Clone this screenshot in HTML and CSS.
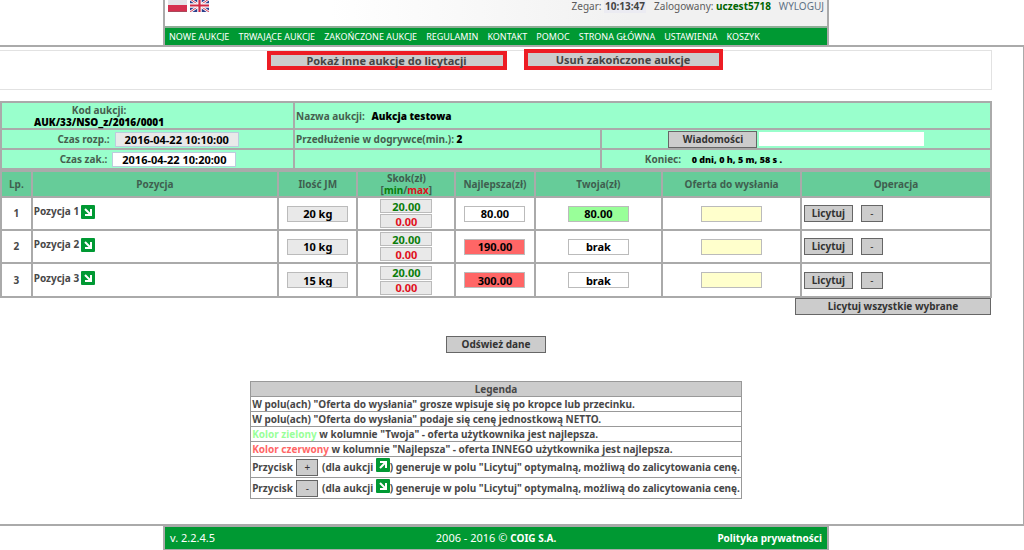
FILE: index.html
```html
<!DOCTYPE html>
<html lang="pl">
<head>
<meta charset="utf-8">
<title>Aukcja testowa</title>
<link rel="stylesheet" href="styles.css">
</head>
<body>
<svg class="defs" aria-hidden="true">
  <symbol id="arrow-down" viewBox="0 0 14 14">
    <rect width="14" height="14" rx="1" fill="#093"/>
    <path d="M4 4l5 5M10 4v6H4" fill="none" stroke="#fff" stroke-width="2"/>
  </symbol>
  <symbol id="arrow-up" viewBox="0 0 14 14">
    <rect width="14" height="14" rx="1" fill="#093"/>
    <path d="M4 10l5-5M4 4h6v6" fill="none" stroke="#fff" stroke-width="2"/>
  </symbol>
</svg>
<div class="frame">
  <header class="header">
    <div class="topbar">
      <div class="flags">
        <svg width="19" height="12" viewBox="0 0 19 12" role="img" aria-label="Polski"><path fill="#e4e4e8" d="M0 0h19v6H0z"/><path fill="#d5304f" d="M0 5h19v6H0z"/><path fill="#a9485a" d="M0 11h19v1H0z"/></svg>
        <svg width="19" height="12" viewBox="0 0 19 12" role="img" aria-label="English"><path fill="#2b3f8c" d="M0 0h19v12H0z"/><path d="M0-1l19 13M19-1L0 12" stroke="#fff" stroke-width="2.6"/><path d="M0-1l19 13M19-1L0 12" stroke="#d02a44" stroke-width=".9"/><path d="M9.500 0v12M0 5.500h19" stroke="#fff" stroke-width="4.500"/><path d="M9.500 0v12M0 5.500h19" stroke="#d02a44" stroke-width="2.200"/></svg>
      </div>
      <div class="session">
        <span>Zegar: <b class="clock">10:13:47</b></span>
        <span>Zalogowany: <b class="user">uczest5718</b></span>
        <a class="logout" href="#">WYLOGUJ</a>
      </div>
    </div>
    <nav class="nav">
      <a href="#">NOWE AUKCJE</a><a href="#">TRWAJĄCE AUKCJE</a><a href="#">ZAKOŃCZONE AUKCJE</a><a href="#">REGULAMIN</a><a href="#">KONTAKT</a><a href="#">POMOC</a><a href="#">STRONA GŁÓWNA</a><a href="#">USTAWIENIA</a><a href="#">KOSZYK</a>
    </nav>
  </header>
</div>
<main class="main">
  <div class="actions">
    <button class="marked wide">Pokaż inne aukcje do licytacji</button>
    <button class="marked tall">Usuń zakończone aukcje</button>
  </div>
  <table class="grid info">
    <colgroup><col class="c-code"><col class="c-name"><col class="c-end"></colgroup>
    <tr class="first">
      <td class="code">Kod aukcji:<br><b>AUK/33/NSO_z/2016/0001</b></td>
      <td colspan="2">Nazwa aukcji: <b class="gap">Aukcja testowa</b></td>
    </tr>
    <tr>
      <td><label class="line">Czas rozp.: <input class="date gray" readonly value="2016-04-22 10:10:00"></label></td>
      <td>Przedłużenie w dogrywce(min.): <b>2</b></td>
      <td><div class="line tight"><button class="btn news">Wiadomości</button><input class="message" aria-label="Wiadomość"></div></td>
    </tr>
    <tr>
      <td><label class="line">Czas zak.: <input class="date" readonly value="2016-04-22 10:20:00"></label></td>
      <td></td>
      <td class="end">Koniec: <b class="gap small">0 dni, 0 h, 5 m, 58 s .</b></td>
    </tr>
  </table>
  <table class="grid items">
    <colgroup><col class="c-no"><col class="c-pos"><col class="c-qty"><col class="c-step"><col class="c-best"><col class="c-own"><col class="c-offer"><col class="c-op"></colgroup>
    <thead>
      <tr><th>Lp.</th><th>Pozycja</th><th>Ilość JM</th><th>Skok(zł)<br>[<span class="min">min</span>/<span class="max">max</span>]</th><th>Najlepsza(zł)</th><th>Twoja(zł)</th><th>Oferta do wysłania</th><th>Operacja</th></tr>
    </thead>
    <tbody>
      <tr>
        <td>1</td>
        <td class="pos"><div class="name">Pozycja 1 <svg class="arrow"><use href="#arrow-down"/></svg></div></td>
        <td><input class="val gray" readonly value="20 kg" aria-label="Ilość"></td>
        <td><div class="steps"><input class="step min" readonly value="20.00" aria-label="Skok min"><input class="step max" readonly value="0.00" aria-label="Skok max"></div></td>
        <td><input class="val" readonly value="80.00" aria-label="Najlepsza"></td>
        <td><input class="val good" readonly value="80.00" aria-label="Twoja"></td>
        <td><input class="val offer" aria-label="Oferta do wysłania"></td>
        <td><div class="ops"><button class="btn bid">Licytuj</button><button class="btn sign">-</button></div></td>
      </tr>
      <tr>
        <td>2</td>
        <td class="pos"><div class="name">Pozycja 2 <svg class="arrow"><use href="#arrow-down"/></svg></div></td>
        <td><input class="val gray" readonly value="10 kg" aria-label="Ilość"></td>
        <td><div class="steps"><input class="step min" readonly value="20.00" aria-label="Skok min"><input class="step max" readonly value="0.00" aria-label="Skok max"></div></td>
        <td><input class="val bad" readonly value="190.00" aria-label="Najlepsza"></td>
        <td><input class="val" readonly value="brak" aria-label="Twoja"></td>
        <td><input class="val offer" aria-label="Oferta do wysłania"></td>
        <td><div class="ops"><button class="btn bid">Licytuj</button><button class="btn sign">-</button></div></td>
      </tr>
      <tr>
        <td>3</td>
        <td class="pos"><div class="name">Pozycja 3 <svg class="arrow"><use href="#arrow-down"/></svg></div></td>
        <td><input class="val gray" readonly value="15 kg" aria-label="Ilość"></td>
        <td><div class="steps"><input class="step min" readonly value="20.00" aria-label="Skok min"><input class="step max" readonly value="0.00" aria-label="Skok max"></div></td>
        <td><input class="val bad" readonly value="300.00" aria-label="Najlepsza"></td>
        <td><input class="val" readonly value="brak" aria-label="Twoja"></td>
        <td><input class="val offer" aria-label="Oferta do wysłania"></td>
        <td><div class="ops"><button class="btn bid">Licytuj</button><button class="btn sign">-</button></div></td>
      </tr>
    </tbody>
  </table>
  <div class="bid-all"><button class="btn all">Licytuj wszystkie wybrane</button></div>
  <div class="refresh"><button class="btn reload">Odśwież dane</button></div>
  <table class="legend">
    <thead><tr><th>Legenda</th></tr></thead>
    <tbody>
      <tr><td>W polu(ach) "Oferta do wysłania" grosze wpisuje się po kropce lub przecinku.</td></tr>
      <tr><td>W polu(ach) "Oferta do wysłania" podaje się cenę jednostkową NETTO.</td></tr>
      <tr><td><span class="key-good">Kolor zielony</span> w kolumnie "Twoja" - oferta użytkownika jest najlepsza.</td></tr>
      <tr><td><span class="key-bad">Kolor czerwony</span> w kolumnie "Najlepsza" - oferta INNEGO użytkownika jest najlepsza.</td></tr>
      <tr class="key"><td>Przycisk <button class="btn sign">+</button> (dla aukcji <svg class="arrow"><use href="#arrow-up"/></svg>) generuje w polu "Licytuj" optymalną, możliwą do zalicytowania cenę.</td></tr>
      <tr class="key"><td>Przycisk <button class="btn sign">-</button> (dla aukcji <svg class="arrow"><use href="#arrow-down"/></svg>) generuje w polu "Licytuj" optymalną, możliwą do zalicytowania cenę.</td></tr>
    </tbody>
  </table>
</main>
<div class="frame">
  <footer class="footer">
    <span>v. 2.2.4.5</span>
    <span>2006 - 2016 © <b>COIG S.A.</b></span>
    <a class="privacy" href="#"><b>Polityka prywatności</b></a>
  </footer>
</div>
</body>
</html>
```
FILE: styles.css
```css
* { box-sizing: border-box; }
body {
  margin: 0;
  background: #fff;
  color: #484848;
  font: 10px/13px "Noto Sans", sans-serif;
}
input, button { font: inherit; margin: 0; padding: 0; border-radius: 0; }
a { color: inherit; text-decoration: none; }
.defs { display: block; width: 0; height: 0; }
.frame { padding-right: 32px; }
.header, .footer {
  max-width: 666px;
  margin: 0 auto;
  border: 2px solid #aaa;
}
.header { border-top: 0; border-bottom: 0; }
.topbar {
  display: flex;
  justify-content: space-between;
  height: 26px;
  padding: 0 3px;
  background: linear-gradient(90deg, #fff 25%, #f1f1f1 70%);
}
.flags { display: flex; gap: 3px; }
.session { display: flex; gap: 8px; color: #5c5c5c; }
.clock { color: #444; background: #ebebf2; padding: 0 1px; }
.user { color: #006400; }
.logout { color: #5f7285; }
.nav {
  display: flex;
  flex-wrap: wrap;
  gap: 9px;
  padding: 1px 4px;
  border-top: 2px solid #8fae97;
  background: #093;
  color: #fff;
  font-size: 9px;
  line-height: 15px;
}
.main {
  padding: 3px 31px 25px 0;
  border: solid #aaa;
  border-width: 2px 1px 2px 0;
  font-weight: 700;
}
.actions {
  display: flex;
  justify-content: center;
  align-items: flex-end;
  gap: 17px;
  height: 40px;
  padding: 0 2px 19px 0;
  border: 1px solid #e2e2e2;
  border-left: 0;
}
.marked {
  border: 4px solid #ed1c24;
  background: #ccc;
  color: #444;
  font-size: 11px;
  line-height: 11px;
  font-weight: 700;
}
.wide { width: 240px; height: 19px; }
.tall { width: 199px; height: 21px; }
.grid {
  width: 100%;
  table-layout: fixed;
  border-collapse: collapse;
}
.grid td, .grid th { border: 2px solid #aaa; padding: 0; }
.info { margin-top: 11px; background: #9fc; color: #46604f; }
.info tr { height: 20px; }
.info .first { height: 27px; }
.info b { color: #000; }
.info td { line-height: 12px; padding-left: 1px; }
.info .code { text-align: center; padding-right: 98px; }
.gap { margin-left: 4px; }
.info .small { font-size: 9px; margin-left: 8px; }
.line { display: flex; justify-content: center; align-items: center; gap: 5px; }
.tight { gap: 2px; }
.date {
  width: 124px;
  height: 15px;
  border: 1px solid #bcd;
  background: #fff;
  color: #000;
  font-size: 11px;
  text-align: center;
}
.info .end { text-align: center; padding-right: 166px; }
.message { width: 165px; height: 14px; border: 0; background: #fff; }
.btn {
  height: 17px;
  border: 1px solid #666;
  background: #ccc;
  color: #333;
  line-height: 13px;
}
.news { width: 89px; }
.bid { width: 49px; }
.sign { width: 22px; font-weight: 400; }
.all { width: 196px; }
.reload { width: 100px; }
.c-code { width: 29.6%; }
.c-name { width: 31%; }
.c-end { width: 39.4%; }
.c-no { width: 3.1%; }
.c-pos { width: 24.9%; }
.c-qty { width: 8%; }
.c-step { width: 9.9%; }
.c-best { width: 8%; }
.c-own { width: 12.9%; }
.c-offer { width: 14%; }
.c-op { width: 19.2%; }
.items { text-align: center; }
.items thead { background: #6c9; color: #3f5f4f; }
.items th { height: 26px; line-height: 12px; }
.items tbody tr { height: 33px; }
.items tbody tr:last-child { height: 34px; }
.min, .step.min { color: #0a7d0a; }
.max, .step.max { color: #e0101c; }
.pos .name { display: flex; align-items: center; gap: 2px; padding: 0 0 4px 1px; }
.arrow { width: 14px; height: 14px; }
.val, .step {
  display: block;
  width: 61px;
  height: 16px;
  margin: 0 auto;
  border: 1px solid #bbb;
  background: #fff;
  color: #000;
  font-size: 11px;
  text-align: center;
}
.steps { display: grid; gap: 1px; }
.step { width: 52px; height: 14px; background: #e9e9e9; line-height: 12px; }
.gray { background: #e9e9e9; }
.good { background: #9f9; }
.bad { background: #f66; }
.offer { background: #ffc; }
.ops { display: flex; gap: 8px; padding-left: 2px; }
.bid-all { display: flex; justify-content: flex-end; padding-right: 1px; }
.refresh { display: flex; justify-content: center; padding: 21px 0 28px; }
.legend { margin: 0 auto; border-collapse: collapse; }
.legend th, .legend td { height: 15px; border: 1px solid #999; padding: 0 1px; line-height: 14px; white-space: nowrap; }
.legend th { background: #ccc; }
.legend .key td { height: 21px; }
.legend .btn { vertical-align: middle; margin: 0 1px; }
.legend .arrow { vertical-align: -1px; }
.key-good { color: #9f9; }
.key-bad { color: #f66; }
.footer {
  display: grid;
  grid-template-columns: 1fr auto 1fr;
  padding: 4px 5px;
  border-top-width: 1px;
  background: #093;
  color: #fff;
  font-size: 11px;
}
.footer b { font-size: 10px; }
.privacy { text-align: right; }
```
